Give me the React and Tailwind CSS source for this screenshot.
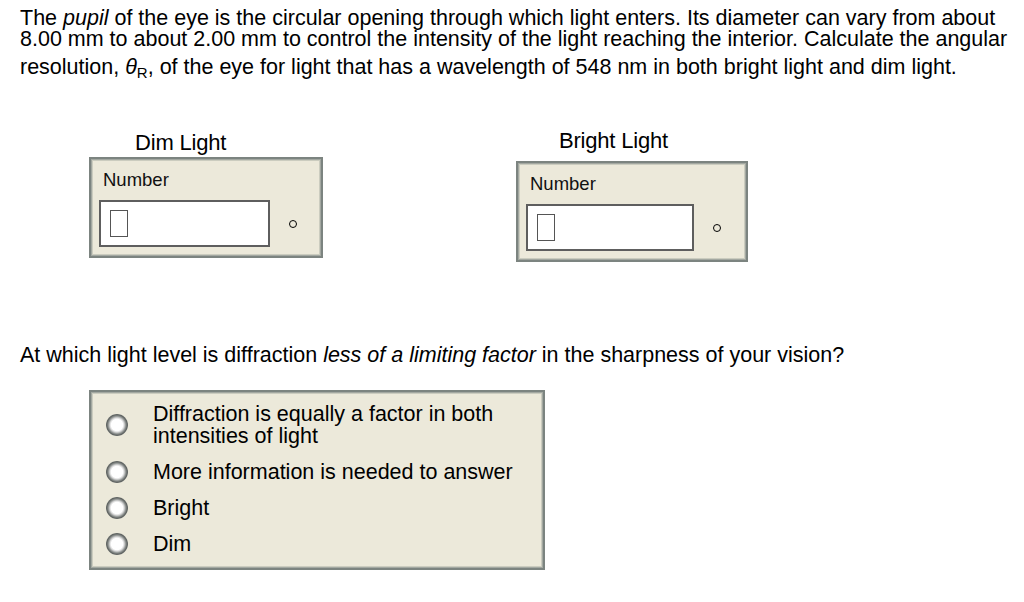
import React from 'react';

const font = { fontFamily: '"Liberation Sans", Arial, sans-serif' };

const boxCls =
  'border-2 border-[#7c8480] shadow-[inset_0_0_0_1px_#a3a8a1,inset_0_0_0_2px_#cbccbf] bg-[#ece9da]';

function Radio() {
  return (
    <div className="w-[22px] h-[22px] shrink-0 rounded-full bg-[radial-gradient(circle_closest-side,#ffffff_52%,#dcdcdc_64%,#8e9290_80%,#5b5f5d_94%,#767a78_100%)]" />
  );
}

function NumberBox({ width, inputWidth, top, labelLeft, label, labelTop }) {
  return (
    <div className="flex flex-col items-start">
      <div className={`text-[22px] tracking-[-0.2px] leading-[24px] ${labelTop} ${labelLeft}`}>{label}</div>
      <div className={`${top} ${width} ${boxCls} pl-[8px] pt-[10px] pb-[9px]`}>
        <div className="text-[18.5px] leading-[22px] text-[#111] pl-[4px]">Number</div>
        <div className="flex items-center mt-[9px]">
          <div className={`h-[47px] ${inputWidth} bg-white border-2 border-[#5e5e5e] pl-[9px] pt-[8px]`}>
            <div className="w-[18px] h-[27px] border border-[#555]" />
          </div>
          <div className="ml-[19px] w-[8px] h-[8px] rounded-full border-[1.5px] border-black" />
        </div>
      </div>
    </div>
  );
}

export default function App() {
  const options = [
    ['Diffraction is equally a factor in both', 'intensities of light'],
    ['More information is needed to answer'],
    ['Bright'],
    ['Dim'],
  ];

  return (
    <div className="w-[1024px] h-[602px] bg-white text-black overflow-hidden" style={font}>
      <div className="pl-[20px] pt-[8px] text-[21.5px] leading-[21px] whitespace-nowrap">
        <div>
          The <i>pupil</i> of the eye is the circular opening through which light enters. Its diameter can vary from about
        </div>
        <div>
          8.00 mm to about 2.00 mm to control the intensity of the light reaching the interior. Calculate the angular
        </div>
        <div className="mt-[7px]">
          resolution, <i>θ</i>
          <sub className="text-[15px]">R</sub>, of the eye for light that has a wavelength of 548 nm in both bright light and dim light.
        </div>
      </div>

      <div className="flex mt-[51px]">
        <div className="ml-[89px]">
          <NumberBox
            label="Dim Light"
            labelTop="mt-[2px]"
            labelLeft="ml-[46px]"
            top="mt-[2px]"
            width="w-[234px]"
            inputWidth="w-[171px]"
          />
        </div>
        <div className="ml-[193px]">
          <NumberBox
            label="Bright Light"
            labelTop=""
            labelLeft="ml-[43px]"
            top="mt-[8px]"
            width="w-[232px]"
            inputWidth="w-[168px]"
          />
        </div>
      </div>

      <p className="pl-[20px] mt-[81px] text-[21.5px] leading-[24px] whitespace-nowrap">
        At which light level is diffraction <i>less of a limiting factor</i> in the sharpness of your vision?
      </p>

      <div className={`ml-[89px] mt-[23px] w-[456px] ${boxCls} pl-[15px] pt-[11px] pb-[13px] flex flex-col gap-[14px]`}>
        {options.map((lines, i) => (
          <div key={i} className="flex items-center">
            <Radio />
            <div className="ml-[25px] text-[21.5px] leading-[22px] whitespace-nowrap">
              {lines.map((l, j) => (
                <div key={j}>{l}</div>
              ))}
            </div>
          </div>
        ))}
      </div>
    </div>
  );
}
